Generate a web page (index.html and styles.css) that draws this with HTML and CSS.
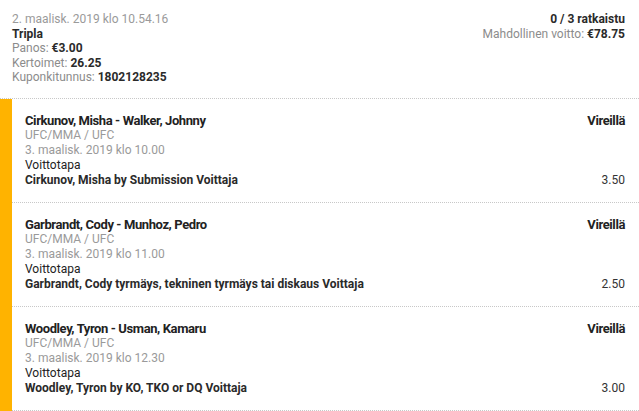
FILE: index.html
```html
<!DOCTYPE html>
<html lang="fi">
<head>
  <meta charset="UTF-8" />
  <title>Kuponki</title>
  <link rel="stylesheet" href="styles.css">
</head>
<body>
  <div class="coupon">
    <div class="summary">
      <div class="summary-left">
        <div class="muted">2. maalisk. 2019 klo 10.54.16</div>
        <div class="strong">Tripla</div>
        <div class="label">Panos: <b>€3.00</b></div>
        <div class="label">Kertoimet: <b>26.25</b></div>
        <div class="label">Kuponkitunnus: <b>1802128235</b></div>
      </div>
      <div class="summary-right">
        <div class="strong">0 / 3 ratkaistu</div>
        <div class="label">Mahdollinen voitto: <b>€78.75</b></div>
      </div>
    </div>

    <div class="bets">
      <div class="bet">
        <div class="bet-info">
          <div class="bet-title">Cirkunov, Misha - Walker, Johnny</div>
          <div class="muted">UFC/MMA / UFC</div>
          <div class="muted">3. maalisk. 2019 klo 10.00</div>
          <div>Voittotapa</div>
          <div class="strong">Cirkunov, Misha by Submission Voittaja</div>
        </div>
        <div class="bet-side">
          <div class="bet-status">Vireillä</div>
          <div class="bet-odds">3.50</div>
        </div>
      </div>

      <div class="bet">
        <div class="bet-info">
          <div class="bet-title">Garbrandt, Cody - Munhoz, Pedro</div>
          <div class="muted">UFC/MMA / UFC</div>
          <div class="muted">3. maalisk. 2019 klo 11.00</div>
          <div>Voittotapa</div>
          <div class="strong">Garbrandt, Cody tyrmäys, tekninen tyrmäys tai diskaus Voittaja</div>
        </div>
        <div class="bet-side">
          <div class="bet-status">Vireillä</div>
          <div class="bet-odds">2.50</div>
        </div>
      </div>

      <div class="bet">
        <div class="bet-info">
          <div class="bet-title">Woodley, Tyron - Usman, Kamaru</div>
          <div class="muted">UFC/MMA / UFC</div>
          <div class="muted">3. maalisk. 2019 klo 12.30</div>
          <div>Voittotapa</div>
          <div class="strong">Woodley, Tyron by KO, TKO or DQ Voittaja</div>
        </div>
        <div class="bet-side">
          <div class="bet-status">Vireillä</div>
          <div class="bet-odds">3.00</div>
        </div>
      </div>
    </div>
  </div>
</body>
</html>
```

FILE: styles.css
```css
body {
  margin: 0;
  font-family: Roboto, "Liberation Sans", sans-serif;
  font-size: 12px;
  line-height: 14.5px;
  color: #222;
  background-color: white;
}

.summary {
  display: flex;
  justify-content: space-between;
  padding: 12px 14px 13px 12px;
  border-bottom: 1px dotted #c8c8c8;
}

.summary-right {
  text-align: right;
}

.muted {
  color: #9a9a9a;
}

.label {
  color: #8c8c8c;
}

.label b,
.strong {
  font-weight: bold;
  color: #2a2a2a;
}

/* Ставки */
.bets {
  border-left: 12px solid #ffb300;
}

.bet {
  display: flex;
  justify-content: space-between;
  padding: 14px 14px 14px 13px;
  line-height: 15px;
  border-bottom: 1px dotted #c8c8c8;
}

.bet-title {
  font-size: 13px;
  font-weight: bold;
  letter-spacing: -0.4px;
  color: #222;
}

.bet-side {
  display: flex;
  flex-direction: column;
  justify-content: space-between;
  align-items: flex-end;
}

.bet-status {
  font-size: 13px;
  font-weight: bold;
  letter-spacing: -0.4px;
}

.bet-odds {
  color: #333;
}
```
